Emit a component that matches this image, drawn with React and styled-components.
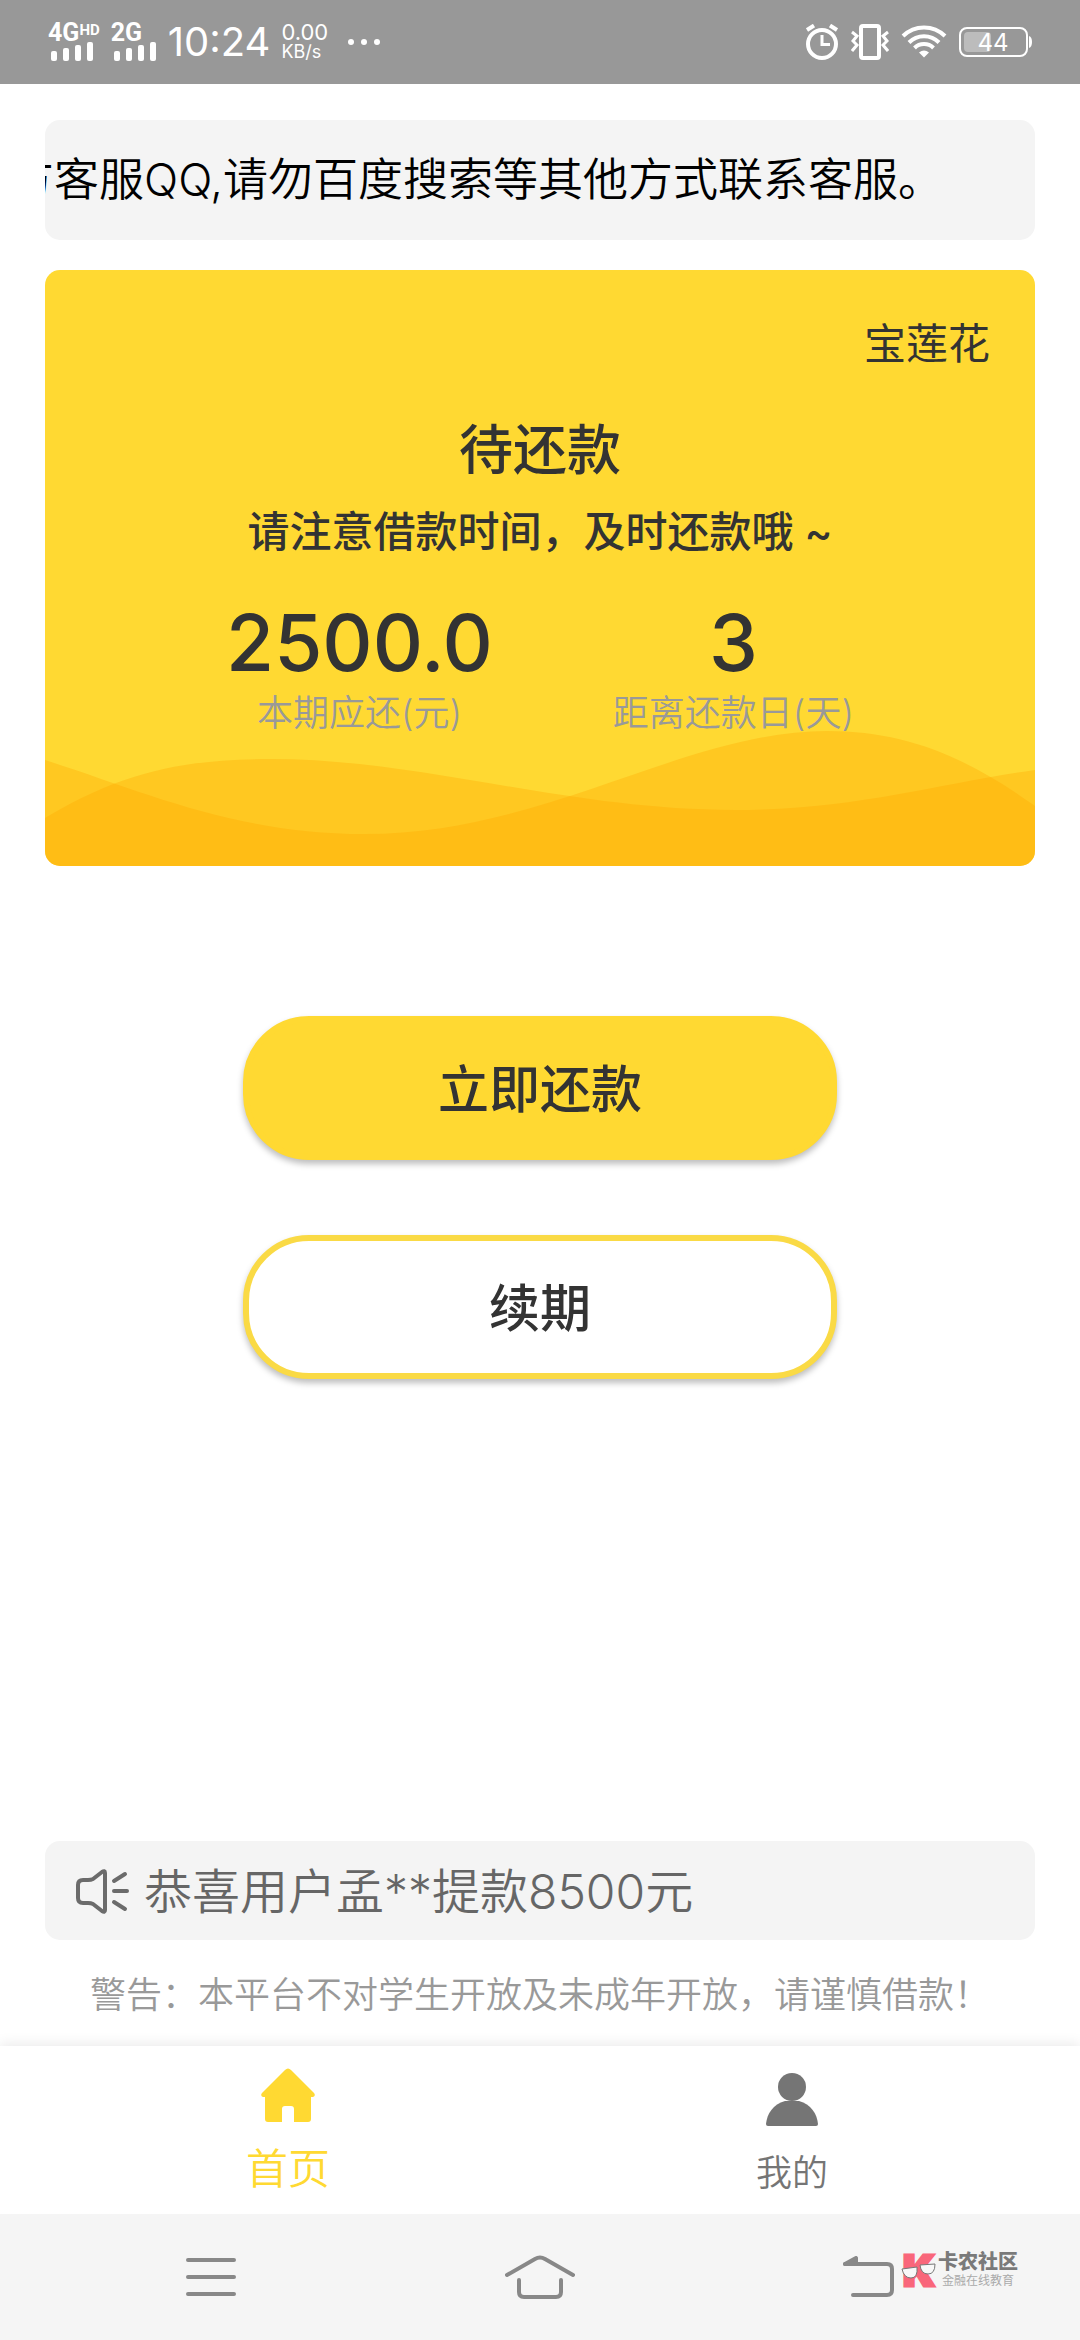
import React from "react";
import styled, { createGlobalStyle } from "styled-components";

const GlobalStyle = createGlobalStyle`
  * {
    box-sizing: border-box;
  }

  body {
    margin: 0;
    background-color: #ffffff;
    font-family: "Inter", "Noto Sans CJK SC", sans-serif;
    color: #333333;
  }
`;

const Page = styled.div`
  display: flex;
  flex-direction: column;
  min-height: 100vh;
`;

const StatusBar = styled.header`
  display: flex;
  align-items: center;
  justify-content: space-between;
  height: 84px;
  padding: 0 48px;
  background-color: #989898;
  color: white;
`;

const StatusGroup = styled.div`
  display: flex;
  align-items: center;
  gap: ${({ $gap }) => $gap}px;
`;

const Signal = styled.div`
  display: flex;
  flex-direction: column;
  font-family: "Roboto", sans-serif;
  font-weight: 700;
  font-size: 25px;
  line-height: 18px;
`;

const SignalName = styled.span`
  display: flex;
  align-items: flex-start;
`;

const SignalSup = styled.sup`
  font-size: 15px;
  line-height: 12px;
  vertical-align: baseline;
`;

const Clock = styled.time`
  font-size: 40px;
  line-height: 48px;
`;

const Speed = styled.div`
  display: flex;
  flex-direction: column;
  font-size: 22px;
  line-height: 20px;
`;

const SpeedUnit = styled.span`
  font-size: 18px;
`;

const Main = styled.main`
  display: flex;
  flex-direction: column;
  flex: 1;
  padding: 36px 45px 24px;
`;

const Marquee = styled.div`
  overflow: hidden;
  border-radius: 15px;
  background-color: #f4f4f4;
  color: black;
  font-weight: 350;
  font-size: 45px;
  line-height: 120px;
  white-space: nowrap;
  text-indent: -36px;
`;

const Card = styled.section`
  position: relative;
  overflow: hidden;
  margin-top: 30px;
  padding: 44px 45px 128px;
  border-radius: 15px;
  background-color: #ffd932;
  text-align: center;
`;

const Waves = styled.svg`
  position: absolute;
  left: 0;
  bottom: 0;
  width: 100%;
  height: 140px;
`;

const CardBody = styled.div`
  position: relative;
`;

const Lender = styled.div`
  font-size: 42px;
  line-height: 60px;
  text-align: right;
`;

const CardTitle = styled.h1`
  margin: 41px 0 0;
  font-weight: 500;
  font-size: 54px;
  line-height: 72px;
`;

const CardHint = styled.p`
  margin: 15px 0 0;
  font-weight: 500;
  font-size: 42px;
  line-height: 60px;
`;

const Figures = styled.div`
  display: flex;
  justify-content: center;
  gap: 120px;
  margin-top: 36px;
`;

const FigureValue = styled.div`
  font-weight: 450;
  font-size: 78px;
  line-height: 90px;
`;

const FigureLabel = styled.div`
  color: #999999;
  font-weight: 350;
  font-size: 36px;
  line-height: 50px;
`;

const Actions = styled.div`
  display: flex;
  flex-direction: column;
  align-items: center;
  gap: 75px;
  margin-top: 150px;
`;

const ActionButton = styled.button`
  width: 60%;
  height: 144px;
  padding: 0 0 4px;
  border: 6px solid ${({ $filled }) => ($filled ? "#ffd932" : "#fada45")};
  border-radius: 66px;
  background-color: ${({ $filled }) => ($filled ? "#ffd932" : "white")};
  box-shadow: 0 4px 6px rgba(0, 0, 0, 0.26);
  color: #333333;
  font-family: inherit;
  font-weight: 500;
  font-size: 51px;
`;

const Broadcast = styled.div`
  display: flex;
  align-items: center;
  gap: 15px;
  margin-top: auto;
  padding: 3px 30px 0;
  border-radius: 15px;
  background-color: #f4f4f4;
  color: #666666;
  font-weight: 350;
  font-size: 48px;
  line-height: 96px;
`;

const Warning = styled.p`
  margin: 28px 0 0;
  color: #999999;
  font-weight: 350;
  font-size: 36px;
  line-height: 54px;
  text-align: center;
`;

const TabBar = styled.nav`
  display: flex;
  justify-content: center;
  height: 168px;
  background-color: white;
  box-shadow: 0 -3px 12px rgba(0, 0, 0, 0.08);
`;

const Tab = styled.a`
  display: flex;
  flex-direction: column;
  align-items: center;
  flex: 1;
  max-width: 504px;
  padding-top: ${({ $active }) => ($active ? 20 : 26)}px;
  color: ${({ $active }) => ($active ? "#ffd932" : "#757575")};
  font-weight: 350;
  font-size: ${({ $active }) => ($active ? 42 : 36)}px;
  line-height: 60px;
  text-decoration: none;
`;

const TabIcon = styled.svg`
  margin-bottom: 15px;
`;

const SystemBar = styled.footer`
  position: relative;
  display: flex;
  align-items: center;
  justify-content: space-between;
  height: 126px;
  padding: 0 186px;
  background-color: #f5f5f5;
`;

const SystemButton = styled.button`
  display: flex;
  padding: 0;
  border: none;
  background: none;
`;

const SystemIcon = styled.svg`
  fill: none;
  stroke: #888888;
  stroke-width: 4;
  stroke-linecap: round;
  stroke-linejoin: round;
`;

const Watermark = styled.div`
  position: absolute;
  right: 62px;
  top: 38px;
  display: flex;
  gap: 3px;
  color: #7a7a7a;
  font-weight: 900;
  font-size: 20px;
  line-height: 21px;
`;

const WatermarkLogo = styled.svg`
  overflow: visible;
`;

const WatermarkSub = styled.div`
  color: #aaaaaa;
  font-weight: 400;
  font-size: 12px;
  line-height: 16px;
  text-align: center;
`;

const SignalItem = ({ name, sup }) => (
  <Signal>
    <SignalName>
      {name}
      {sup && <SignalSup>{sup}</SignalSup>}
    </SignalName>
    <svg width="46" height="19" viewBox="0 0 46 19" fill="white">
      <rect x="3" y="9" width="6" height="10" rx="2" />
      <rect x="15" y="6" width="6" height="13" rx="2" />
      <rect x="27" y="3" width="6" height="16" rx="2" />
      <rect x="39" y="0" width="6" height="19" rx="2" />
    </svg>
  </Signal>
);

const AlarmIcon = () => (
  <svg width="34" height="36" viewBox="0 0 34 36" fill="none" stroke="white">
    <circle cx="17" cy="20" r="14" strokeWidth="4" />
    <path d="M17 11v9.500h8" strokeWidth="3" />
    <path d="M2 6l7-4.500M32 6l-7-4.500" strokeWidth="4" />
  </svg>
);

const VibrateIcon = () => (
  <svg width="38" height="36" viewBox="0 0 38 36" fill="none" stroke="white">
    <rect x="10" y="2" width="18" height="32" rx="2" strokeWidth="4" />
    <path
      d="M1 8l5 4-4 5 4 4-5 6M37 8l-5 4 4 5-4 4 5 6"
      strokeWidth="3"
    />
  </svg>
);

const WifiIcon = () => (
  <svg width="46" height="34" viewBox="0 0 46 34" fill="none" stroke="white">
    <path d="M2 11a30 30 0 0 1 42 0" strokeWidth="4" />
    <path d="M8 17.500a21 21 0 0 1 30 0" strokeWidth="4" />
    <path d="M13.500 23a13.500 13.500 0 0 1 19 0" strokeWidth="4" />
    <path d="M18 27.500q5-4 10 0l-5 5z" fill="white" stroke="none" />
  </svg>
);

const BatteryIcon = ({ level }) => (
  <svg width="73" height="32" viewBox="0 0 73 32">
    <rect
      x="1"
      y="2"
      width="67"
      height="28"
      rx="7"
      fill="none"
      stroke="white"
      strokeWidth="2"
    />
    <path d="M70 10q3 1 3 6t-3 6z" fill="white" />
    <rect x="5" y="6" width="27" height="20" rx="4" fill="#bcbcbc" />
    <text x="34" y="25" fill="white" fontSize="24" textAnchor="middle">
      {level}
    </text>
  </svg>
);

const Figure = ({ value, label }) => (
  <div>
    <FigureValue>{value}</FigureValue>
    <FigureLabel>{label}</FigureLabel>
  </div>
);

const SpeakerIcon = () => (
  <svg
    width="54"
    height="46"
    viewBox="0 0 54 46"
    fill="none"
    stroke="#6b6b6b"
    strokeWidth="4"
    strokeLinejoin="round"
    strokeLinecap="round"
  >
    <path d="M8 11h5q3 0 5-1l9-7q3-2 3 1v37q0 3-3 1l-9-7q-2-1-5-1H8q-5 0-5-5V16q0-5 5-5z" />
    <path d="M39 12l11-7M39 22h13M39 33l11 7" />
  </svg>
);

export default function App() {
  return (
    <Page>
      <GlobalStyle />
      <StatusBar>
        <StatusGroup $gap={11}>
          <SignalItem name="4G" sup="HD" />
          <SignalItem name="2G" />
          <Clock>10:24</Clock>
          <Speed>
            0.00
            <SpeedUnit>KB/s</SpeedUnit>
          </Speed>
          <svg width="46" height="8" viewBox="0 0 46 8" fill="white">
            <circle cx="12" cy="4" r="3" />
            <circle cx="25" cy="4" r="3" />
            <circle cx="38" cy="4" r="3" />
          </svg>
        </StatusGroup>
        <StatusGroup $gap={12}>
          <AlarmIcon />
          <VibrateIcon />
          <WifiIcon />
          <BatteryIcon level="44" />
        </StatusGroup>
      </StatusBar>

      <Main>
        <Marquee>方客服QQ,请勿百度搜索等其他方式联系客服。</Marquee>

        <Card>
          <Waves
            viewBox="0 0 990 140"
            preserveAspectRatio="none"
            fill="#ffa800"
            fillOpacity="0.34"
          >
            <path d="M0 34C100 66 190 108 320 108C500 108 640 5 782 5C860 5 920 30 990 80V140H0Z" />
            <path d="M0 92C70 50 130 33 225 33C380 33 520 84 690 84C810 84 890 58 990 44V140H0Z" />
          </Waves>
          <CardBody>
            <Lender>宝莲花</Lender>
            <CardTitle>待还款</CardTitle>
            <CardHint>请注意借款时间，及时还款哦 ~</CardHint>
            <Figures>
              <Figure value="2500.0" label="本期应还(元)" />
              <Figure value="3" label="距离还款日(天)" />
            </Figures>
          </CardBody>
        </Card>

        <Actions>
          <ActionButton $filled>立即还款</ActionButton>
          <ActionButton>续期</ActionButton>
        </Actions>

        <Broadcast>
          <SpeakerIcon />
          恭喜用户孟**提款8500元
        </Broadcast>
        <Warning>警告：本平台不对学生开放及未成年开放，请谨慎借款！</Warning>
      </Main>

      <TabBar>
        <Tab href="#home" $active>
          <TabIcon width="54" height="58" viewBox="0 0 54 58" fill="#ffd932">
            <path d="M24 4q3-3 6 0l23 23q2 3-1 4h-2v22q0 3-3 3H33V43q0-3-3-3h-6q-3 0-3 3v13H7q-3 0-3-3V31H2q-3-1-1-4z" />
          </TabIcon>
          首页
        </Tab>
        <Tab href="#mine">
          <TabIcon width="54" height="56" viewBox="0 0 54 56" fill="#757575">
            <ellipse cx="27" cy="15" rx="14" ry="14" />
            <path d="M20 29h14c12 3 18 13 19 23q0 2-2 2H3q-2 0-2-2c1-10 7-20 19-23z" />
          </TabIcon>
          我的
        </Tab>
      </TabBar>

      <SystemBar>
        <SystemButton aria-label="菜单">
          <SystemIcon width="50" height="40" viewBox="0 0 50 40">
            <path d="M2 3h46M2 20h46M2 37h46" />
          </SystemIcon>
        </SystemButton>
        <SystemButton aria-label="主页">
          <SystemIcon width="70" height="46" viewBox="0 0 70 46">
            <path d="M2 21L30 5q5-3 10 0L68 21" />
            <path d="M14 26v12q0 5 5 5h32q5 0 5-5V26" />
          </SystemIcon>
        </SystemButton>
        <SystemButton aria-label="返回">
          <SystemIcon width="51" height="42" viewBox="0 0 51 42">
            <path d="M2 8h42q5 0 5 5v21q0 5-5 5H10" />
            <path d="M2 8L13 2v6z" fill="#888888" />
          </SystemIcon>
        </SystemButton>
        <Watermark>
          <WatermarkLogo width="34" height="38" viewBox="0 0 34 38">
            <text
              x="18"
              y="34"
              fill="#f9667a"
              stroke="#f9667a"
              strokeWidth="3"
              fontSize="42"
              fontWeight="900"
              textAnchor="middle"
            >
              K
            </text>
            <path
              d="M1 17l15-2q1 11-6 11-7 0-9-9zM19 13l15-1q0 10-7 10-7 0-8-9z"
              fill="#f8f8f8"
              stroke="#777777"
            />
          </WatermarkLogo>
          <div>
            卡农社区
            <WatermarkSub>金融在线教育</WatermarkSub>
          </div>
        </Watermark>
      </SystemBar>
    </Page>
  );
}
